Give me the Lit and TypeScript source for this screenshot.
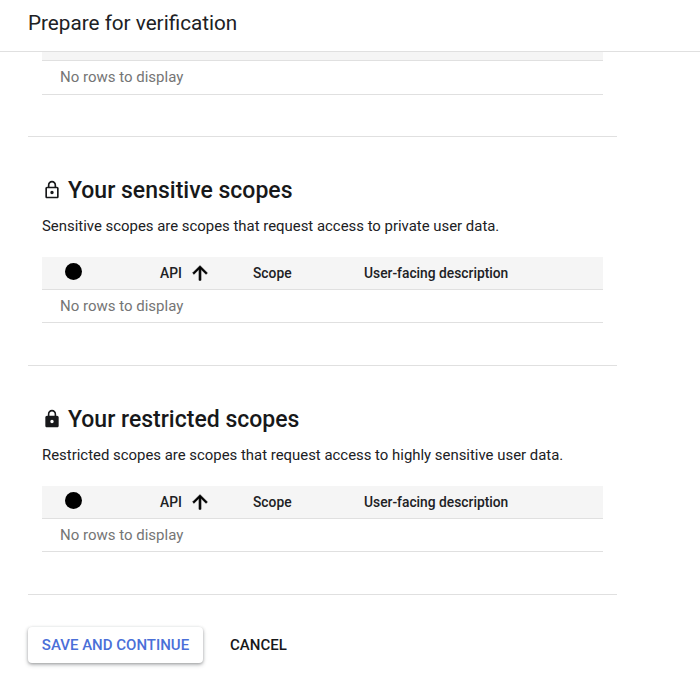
import { LitElement, html, css } from 'lit';
import { customElement } from 'lit/decorators.js';

const lockOutline = html`<svg class="lock" viewBox="0 0 24 24" width="20" height="20"><path fill="currentColor" d="M18 8h-1V6c0-2.76-2.24-5-5-5S7 3.24 7 6v2H6c-1.1 0-2 .9-2 2v10c0 1.1.9 2 2 2h12c1.1 0 2-.9 2-2V10c0-1.1-.9-2-2-2zM9 6c0-1.66 1.34-3 3-3s3 1.34 3 3v2H9V6zm9 14H6V10h12v10zm-6-3c1.1 0 2-.9 2-2s-.9-2-2-2-2 .9-2 2 .9 2 2 2z"/></svg>`;
const lockFilled = html`<svg class="lock" viewBox="0 0 24 24" width="20" height="20"><path fill="currentColor" d="M18 8h-1V6c0-2.76-2.24-5-5-5S7 3.24 7 6v2H6c-1.1 0-2 .9-2 2v10c0 1.1.9 2 2 2h12c1.1 0 2-.9 2-2V10c0-1.1-.9-2-2-2zm-6 9c-1.1 0-2-.9-2-2s.9-2 2-2 2 .9 2 2-.9 2-2 2zm3.1-9H8.9V6c0-1.71 1.39-3.1 3.1-3.1s3.1 1.39 3.1 3.1v2z"/></svg>`;
const arrowUp = html`<svg class="arrow" viewBox="0 0 24 24" width="22" height="22"><path fill="currentColor" stroke="currentColor" stroke-width="0.8" d="M4 12l1.41 1.41L11 7.83V20h2V7.83l5.58 5.59L20 12l-8-8-8 8z"/></svg>`;

@customElement('app-root')
export class AppRoot extends LitElement {
  static styles = css`
    :host {
      display: block;
      width: 700px;
      height: 684px;
      overflow: hidden;
      background: #fff;
      font-family: Roboto, 'Liberation Sans', sans-serif;
      color: #202124;
    }

    .topbar {
      height: 51px;
      border-bottom: 1px solid #e0e0e0;
      padding-left: 28px;
      display: flex;
      align-items: center;
    }

    .topbar h1 {
      margin: 0 0 5px;
      font-size: 20.7px;
      font-weight: 400;
      color: #202124;
    }

    .content {
      width: 589px;
      margin-left: 28px;
    }

    .section {
      border-bottom: 1px solid #e0e0e0;
      padding: 0 14px 42px;
    }

    .section:first-child {
      padding-bottom: 41px;
    }

    .section:first-child .empty {
      height: 34px;
      padding-bottom: 1px;
      box-sizing: border-box;
    }

    .section + .section {
      padding-top: 39px;
    }

    .title {
      display: flex;
      align-items: center;
      gap: 6px;
      height: 28px;
      margin: 0;
      font-size: 23px;
      font-weight: 500;
      color: #17181a;
    }

    .lock {
      flex: none;
      color: #17181a;
    }

    .desc {
      margin: 12px 0 21px;
      font-size: 14.92px;
      line-height: 20px;
      color: #202124;
    }

    .head {
      display: grid;
      grid-template-columns: 118px 93px 111px 1fr;
      align-items: center;
      height: 32px;
      background: #f5f5f5;
      border-bottom: 1px solid #e0e0e0;
      font-size: 13.8px;
      font-weight: 500;
      color: #202124;
    }

    .head.clipped {
      height: 8px;
    }

    .dot {
      width: 17px;
      height: 17px;
      margin: 0 0 3px 23px;
      border-radius: 50%;
      background: #000;
    }

    .api {
      display: flex;
      align-items: center;
      gap: 7px;
    }

    .arrow {
      color: #000;
    }

    .empty {
      height: 32px;
      padding-left: 18px;
      display: flex;
      align-items: center;
      border-bottom: 1px solid #e0e0e0;
      font-size: 15px;
      color: #757575;
    }

    .actions {
      display: flex;
      align-items: center;
      gap: 27px;
      padding-top: 32px;
    }

    button {
      font-family: inherit;
      font-size: 15px;
      font-weight: 500;
      height: 36px;
      border: 0;
      border-radius: 4px;
      background: #fff;
      cursor: pointer;
    }

    .primary {
      width: 175px;
      padding: 0;
      color: #4a6fd8;
      box-shadow: 0 1px 3px rgba(60, 64, 67, 0.35), 0 2px 4px rgba(60, 64, 67, 0.25);
    }

    .secondary {
      padding: 0;
      color: #17181a;
    }
  `;

  private renderHead() {
    return html`
      <div class="head">
        <div class="dot"></div>
        <div class="api">API ${arrowUp}</div>
        <div>Scope</div>
        <div>User-facing description</div>
      </div>
    `;
  }

  private renderScopes(icon: unknown, title: string, desc: string) {
    return html`
      <section class="section">
        <h2 class="title">${icon}${title}</h2>
        <p class="desc">${desc}</p>
        ${this.renderHead()}
        <div class="empty">No rows to display</div>
      </section>
    `;
  }

  render() {
    return html`
      <header class="topbar"><h1>Prepare for verification</h1></header>
      <div class="content">
        <section class="section">
          <div class="head clipped"></div>
          <div class="empty">No rows to display</div>
        </section>
        ${this.renderScopes(lockOutline, 'Your sensitive scopes', 'Sensitive scopes are scopes that request access to private user data.')}
        ${this.renderScopes(lockFilled, 'Your restricted scopes', 'Restricted scopes are scopes that request access to highly sensitive user data.')}
        <div class="actions">
          <button class="primary">SAVE AND CONTINUE</button>
          <button class="secondary">CANCEL</button>
        </div>
      </div>
    `;
  }
}
